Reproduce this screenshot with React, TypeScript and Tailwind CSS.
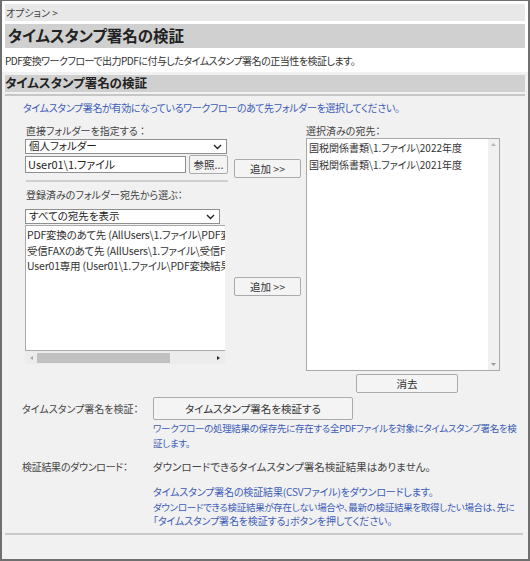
import React from "react";

const Chevron = () => (
  <svg width="9" height="6" viewBox="0 0 9 6" className="shrink-0">
    <path d="M1 1 L4.5 4.5 L8 1" fill="none" stroke="#222" strokeWidth="1.4" />
  </svg>
);

const Select = ({ label, w }: { label: string; w: string }) => (
  <div className={`${w} h-[15px] bg-white border border-[#8f8f8f] flex items-center justify-between pl-[3px] pr-[4px] text-[10.5px] leading-none text-[#222]`}>
    <span>{label}</span>
    <Chevron />
  </div>
);

const Btn = ({ children, cls }: { children: React.ReactNode; cls: string }) => (
  <div className={`${cls} bg-[#f4f4f4] border border-[#aaaaaa] rounded-[2px] flex items-center justify-center text-[#333] whitespace-nowrap`}>
    {children}
  </div>
);

export default function App() {
  return (
    <div className="w-[530px] h-[561px] bg-white border-x-2 border-t border-b-2 border-[#6f6f6f] flex flex-col overflow-hidden font-['Noto_Sans_CJK_JP',sans-serif] [font-feature-settings:'palt'] text-[#333]">
      <div className="px-[3px] pt-[3px]">
        <div className="h-[17px] bg-[#e8e8e8] flex items-center pl-[1px] text-[10px] text-[#444] whitespace-pre">オプション &gt;</div>
        <div className="mt-[3px] h-[24px] bg-[#d0d0d0] flex items-center pl-[3px] text-[15.5px] font-bold text-[#222]">
          タイムスタンプ署名の検証
        </div>
        <div className="h-[24px] flex items-center text-[10px] tracking-[-0.5px] text-[#333] whitespace-nowrap">
          PDF変換ワークフローで出力PDFに付与したタイムスタンプ署名の正当性を検証します。
        </div>
      </div>
      <div className="flex-1 bg-[#f1f1f1] pt-[3px] px-[3px] flex flex-col">
        <div className="h-[17px] bg-[#d0d0d0] flex items-center pl-[0px] text-[12.5px] font-bold text-[#222]">
          タイムスタンプ署名の検証
        </div>
        <div className="mt-[2px] h-[2px] bg-[#c6c6c6]" />
        <div className="mt-[4px] h-[14px] flex items-center pl-[18px] text-[10px] tracking-[-0.35px] text-[#3c5cb8] whitespace-nowrap">
          タイムスタンプ署名が有効になっているワークフローのあて先フォルダーを選択してください。
        </div>

        <div className="mt-[9px] flex items-start pl-[20px]">
          {/* left column */}
          <div className="w-[203px] shrink-0 flex flex-col">
            <div className="h-[14px] flex items-center pl-[1px] text-[10px] text-[#444] whitespace-pre">直接フォルダーを指定する ：</div>
            <div className="mt-[2px]">
              <Select label="個人フォルダー" w="w-[202px]" />
            </div>
            <div className="mt-[1px] h-[19px] flex items-center">
              <div className="w-[161px] h-[17px] bg-white border border-[#8f8f8f] flex items-center pl-[2px] text-[11px] text-[#222]">
                User01\1.ファイル
              </div>
              <Btn cls="ml-[3px] w-[39px] h-[19px] text-[10.5px]">参照...</Btn>
            </div>
            <div className="mt-[6px] ml-[1px] h-[2px] bg-[#cfcfcf]" />
            <div className="mt-[5px] h-[14px] flex items-center pl-[1px] text-[10px] text-[#444] whitespace-nowrap">登録済みのフォルダー宛先から選ぶ：</div>
            <div className="mt-[8px]">
              <Select label="すべての宛先を表示" w="w-[195px]" />
            </div>
            <div className="mt-[1px] w-[200px] h-[126px] bg-white border border-[#a9a9a9] border-r-0 overflow-hidden pl-[1px] pt-[1px] text-[10.5px] tracking-[-0.2px] leading-[15.5px] text-[#333] whitespace-nowrap">
              <div>PDF変換のあて先 (AllUsers\1.ファイル\PDF変換結果)</div>
              <div>受信FAXのあて先 (AllUsers\1.ファイル\受信FAX)</div>
              <div>User01専用 (User01\1.ファイル\PDF変換結果)</div>
            </div>
            <div className="w-[200px] h-[13px] bg-[#ececec] flex items-center">
              <svg width="10" height="10" viewBox="0 0 10 10" className="ml-[2px]">
                <path d="M6 3 L3 5 L6 7 Z" fill="#a8a8a8" />
              </svg>
              <div className="w-[133px] h-[10px] bg-[#c1c1c1]" />
              <div className="flex-1" />
              <svg width="10" height="10" viewBox="0 0 10 10" className="mr-[2px]">
                <path d="M4 3 L7 5 L4 7 Z" fill="#222" />
              </svg>
            </div>
          </div>

          {/* middle column */}
          <div className="ml-[6px] w-[67px] shrink-0 flex flex-col">
            <Btn cls="mt-[36px] h-[19px] text-[10.5px]">追加 &gt;&gt;</Btn>
            <Btn cls="mt-[99px] h-[19px] text-[10.5px]">追加 &gt;&gt;</Btn>
          </div>

          {/* right column */}
          <div className="ml-[5px] w-[194px] shrink-0 flex flex-col">
            <div className="h-[14px] flex items-center text-[10px] text-[#444]">選択済みの宛先：</div>
            <div className="mt-[1px] h-[233px] bg-white border border-[#a9a9a9] flex">
              <div className="flex-1 pl-[2px] text-[10px] leading-[17px] text-[#333] whitespace-nowrap overflow-hidden">
                <div>国税関係書類\1.ファイル\2022年度</div>
                <div>国税関係書類\1.ファイル\2021年度</div>
              </div>
              <div className="w-[11px] bg-[#f0f0f0] flex flex-col justify-between items-center py-[3px]">
                <svg width="7" height="5" viewBox="0 0 7 5">
                  <path d="M1 4 L3.5 1 L6 4 Z" fill="#b5b5b5" />
                </svg>
                <svg width="7" height="5" viewBox="0 0 7 5">
                  <path d="M1 1 L3.5 4 L6 1 Z" fill="#9a9a9a" />
                </svg>
              </div>
            </div>
            <Btn cls="mt-[3px] ml-[50px] w-[102px] h-[19px] text-[10.5px]">消去</Btn>
          </div>
        </div>

        {/* verify row */}
        <div className="mt-[4px] flex items-start">
          <div className="w-[148px] shrink-0 h-[23px] flex items-center pl-[17px] text-[10px] text-[#444] whitespace-nowrap">タイムスタンプ署名を検証：</div>
          <div className="flex flex-col">
            <Btn cls="w-[200px] h-[23px] text-[10.5px]">タイムスタンプ署名を検証する</Btn>
            <div className="mt-[1px] text-[9.5px] tracking-[-0.3px] leading-[15px] text-[#3c5cb8] whitespace-nowrap">
              ワークフローの処理結果の保存先に存在する全PDFファイルを対象にタイムスタンプ署名を検
              <br />
              証します。
            </div>
          </div>
        </div>

        {/* download row */}
        <div className="mt-[8px] flex items-start">
          <div className="w-[148px] shrink-0 h-[15px] flex items-center pl-[17px] text-[10px] tracking-[-0.3px] text-[#444] whitespace-nowrap">検証結果のダウンロード：</div>
          <div className="flex flex-col whitespace-nowrap">
            <div className="h-[15px] flex items-center text-[10.5px] text-[#444]">ダウンロードできるタイムスタンプ署名検証結果はありません。</div>
            <div className="mt-[11px] flex flex-col leading-[14.5px] text-[#3c5cb8]">
              <div className="text-[10px] tracking-[-0.15px]">タイムスタンプ署名の検証結果(CSVファイル)をダウンロードします。</div>
              <div className="text-[9.5px] tracking-[-0.3px]">ダウンロードできる検証結果が存在しない場合や、最新の検証結果を取得したい場合は、先に</div>
              <div className="text-[10px] tracking-[-0.15px]">「タイムスタンプ署名を検証する」ボタンを押してください。</div>
            </div>
          </div>
        </div>

        <div className="mt-[4px] mr-[2px] h-[2px] bg-[#c9c9c9]" />
      </div>
    </div>
  );
}
